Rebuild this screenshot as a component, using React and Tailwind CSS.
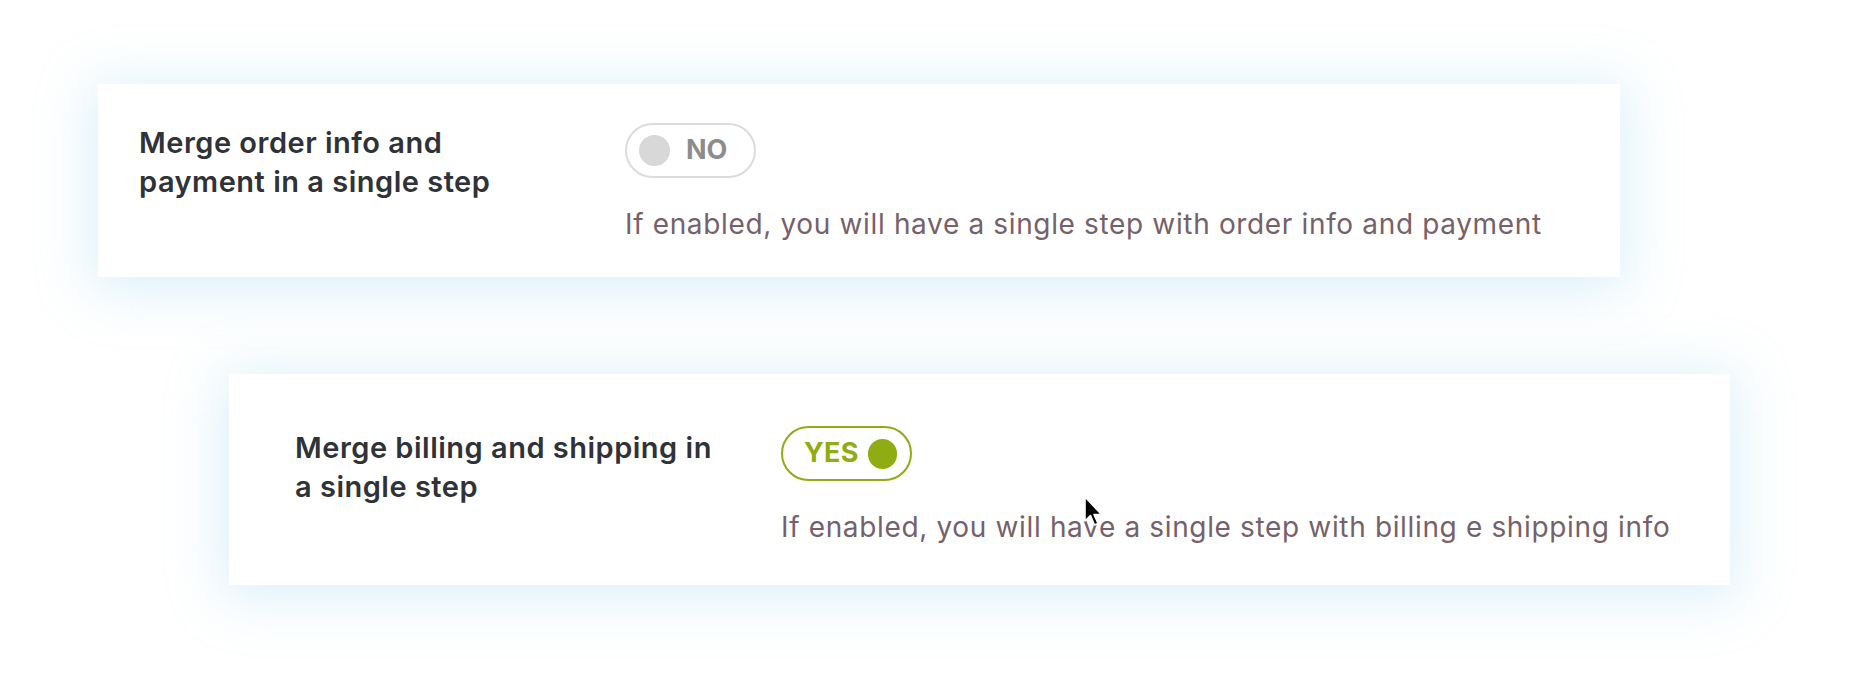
import React from 'react'

const font = { fontFamily: 'Inter, "Noto Sans", sans-serif' }

function Toggle({ on }) {
  if (on) {
    return (
      <div className="w-[131px] h-[55px] rounded-full border-2 border-[#8fad12] flex items-center pl-[21px] pr-[13px] gap-[9px] bg-white">
        <span className="text-[27px] font-bold text-[#8fad12] tracking-[0.3px]">YES</span>
        <span className="w-[30px] h-[30px] rounded-full bg-[#8fad12]" />
      </div>
    )
  }
  return (
    <div className="w-[131px] h-[55px] rounded-full border-2 border-[#dcdcdc] flex items-center pl-[12px] gap-[16px] bg-white">
      <span className="w-[31px] h-[31px] rounded-full bg-[#d8d8d8]" />
      <span className="text-[27px] font-bold text-[#8c8c8c]">NO</span>
    </div>
  )
}

function SettingCard({ title, hint, on, className, inner, labelPad }) {
  return (
    <div className={`bg-white shadow-[0_6px_50px_6px_rgba(150,212,235,0.34)] ${className}`}>
      <div className={`flex ${inner}`}>
        <div className={`w-[486px] shrink-0 ${labelPad}`}>
          <h3 className="max-w-[434px] text-[29px] leading-[39px] font-semibold tracking-[0.5px] text-[#2f3237]">{title}</h3>
        </div>
        <div className="flex flex-col items-start">
          <Toggle on={on} />
          <p className="mt-[29px] text-[28px] leading-[34px] tracking-[0.65px] text-[#76616a]">{hint}</p>
        </div>
      </div>
    </div>
  )
}

export default function App() {
  return (
    <div className="relative w-[1873px] h-[675px] bg-white overflow-hidden" style={font}>
      <div className="pt-[84px]">
        <SettingCard
          className="ml-[98px] w-[1522px] h-[193px]"
          inner="pl-[41px] pt-[39px]"
          labelPad=""
          title="Merge order info and payment in a single step"
          hint="If enabled, you will have a single step with order info and payment"
          on={false}
        />
        <SettingCard
          className="ml-[229px] mt-[97px] w-[1501px] h-[211px]"
          inner="pl-[66px] pt-[52px]"
          labelPad="pt-[2px]"
          title="Merge billing and shipping in a single step"
          hint="If enabled, you will have a single step with billing e shipping info"
          on={true}
        />
      </div>

      {/* mouse pointer */}
      <svg className="absolute left-[1083px] top-[496px]" width="22" height="32" viewBox="0 0 22 32">
        <path d="M2 1 L2 25 L7.5 19.5 L11.5 29 L15 27.5 L11 18.5 L18.5 18.5 Z" fill="#000" stroke="#fff" strokeWidth="1.6" strokeLinejoin="round" />
      </svg>
    </div>
  )
}
